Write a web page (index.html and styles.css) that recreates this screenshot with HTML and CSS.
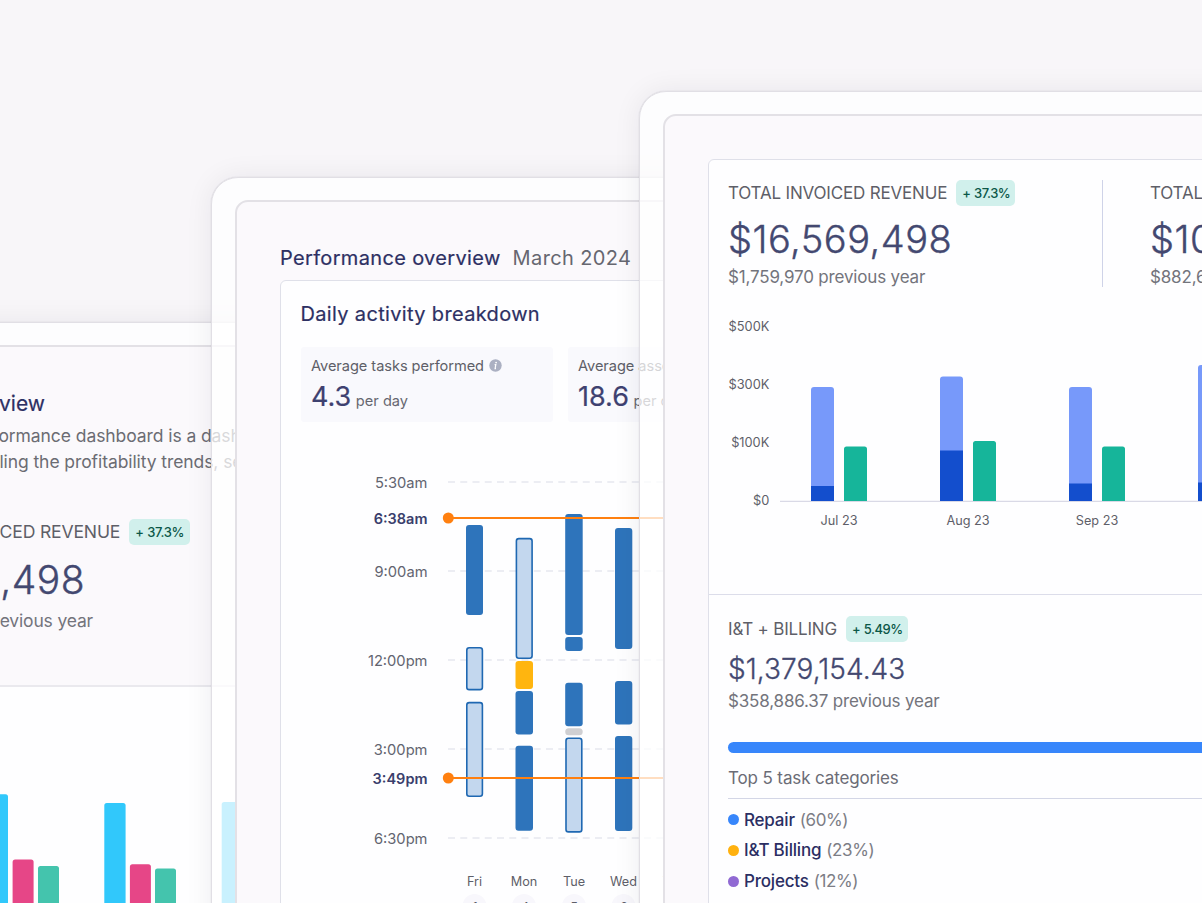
FILE: index.html
```html
<!DOCTYPE html>
<html lang="en">
<head>
<meta charset="utf-8">
<title>Performance dashboards</title>
<link rel="stylesheet" href="styles.css">
</head>
<body>
<main class="stage">

  <section class="window window-profit">
    <div class="screen">
      <header class="profit-head">
        <h2 class="profit-title">Profitability overview</h2>
        <p class="profit-copy profit-copy-a">performance dashboard is a dashboard</p>
        <p class="profit-copy profit-copy-b">detailing the profitability trends, seasonal</p>
        <div class="profit-kpi">
          <div class="kpi-head"><span class="kpi-name">TOTAL INVOICED REVENUE</span><span class="badge">+ 37.3%</span></div>
          <div class="kpi-value">$16,569,498</div>
          <div class="kpi-prev">$1,759,970 previous year</div>
        </div>
      </header>
      <svg class="profit-chart" viewBox="-190 687 620 300" width="620" height="300">
        <g fill="#31c8fb">
          <rect x="-13" y="794.3" width="21" height="150" rx="2.5"/>
          <rect x="104.3" y="803" width="21.3" height="150" rx="2.5"/>
          <rect x="221.7" y="802" width="21.3" height="150" rx="2.5"/>
        </g>
        <g fill="#e64687">
          <rect x="12.6" y="859.4" width="21" height="90" rx="2.5"/>
          <rect x="129.9" y="864.2" width="21" height="90" rx="2.5"/>
        </g>
        <g fill="#44c4ad">
          <rect x="38" y="866" width="21" height="90" rx="2.5"/>
          <rect x="155" y="868.4" width="21" height="90" rx="2.5"/>
        </g>
      </svg>
    </div>
  </section>

  <section class="window window-activity">
    <div class="screen">
      <header class="activity-head">
        <h2 class="title">Performance overview</h2>
        <span class="period">March 2024</span>
      </header>
      <div class="panel activity-panel">
        <h3 class="title activity-title">Daily activity breakdown</h3>
        <div class="stats">
          <div class="stat">
            <div class="stat-label">Average tasks performed
              <svg class="info" viewBox="0 0 13 13" width="13" height="13"><circle cx="6.5" cy="6.5" r="6.2" fill="#abb0c2"/><circle cx="7.1" cy="3.6" r="0.9" fill="#fff"/><path d="M5.6 5.6h1.2l-.7 4h.9" fill="none" stroke="#fff" stroke-width="1.2"/></svg>
            </div>
            <div class="stat-value">4.3 <small>per day</small></div>
          </div>
          <div class="stat">
            <div class="stat-label">Average assets serviced</div>
            <div class="stat-value">18.6 <small>per day</small></div>
          </div>
        </div>
        <svg class="activity-chart" viewBox="281 452 500 480" width="500" height="480">
          <g class="grid">
            <path d="M448 482H760M448 571H760M448 660H760M448 749H760M448 838H760"/>
          </g>
          <g class="time">
            <text x="427.5" y="487.7">5:30am</text>
            <text x="427.5" y="576.7">9:00am</text>
            <text x="427.5" y="665.7">12:00pm</text>
            <text x="427.5" y="754.7">3:00pm</text>
            <text x="427.5" y="843.7">6:30pm</text>
            <text class="mark" x="427.5" y="524">6:38am</text>
            <text class="mark" x="427.5" y="783.7">3:49pm</text>
          </g>
          <g fill="#2e74bb">
            <rect x="466" y="525" width="17" height="90" rx="3"/>
            <rect x="515.5" y="691" width="17.5" height="43.5" rx="3"/>
            <rect x="515.5" y="745.7" width="17.5" height="85" rx="3"/>
            <rect x="565.2" y="514" width="17.5" height="121" rx="3"/>
            <rect x="565.2" y="637" width="17.5" height="14" rx="3"/>
            <rect x="565.2" y="682.7" width="17.5" height="43.5" rx="3"/>
            <rect x="615" y="528" width="17.3" height="121" rx="3"/>
            <rect x="615" y="681" width="17.3" height="43.5" rx="3"/>
            <rect x="615" y="736" width="17.3" height="95" rx="3"/>
          </g>
          <g fill="#c3d7ee" stroke="#1f68b2" stroke-width="1.6">
            <rect x="466.8" y="647.8" width="15.6" height="41.8" rx="2.4"/>
            <rect x="466.8" y="702.6" width="15.6" height="93.6" rx="2.4"/>
            <rect x="516.4" y="538.6" width="15.7" height="119.6" rx="2.4"/>
            <rect x="566" y="738.3" width="15.8" height="93.6" rx="2.4"/>
          </g>
          <rect x="515.5" y="661" width="17.5" height="28" rx="3" fill="#ffb50f"/>
          <rect x="565.2" y="728.2" width="17.5" height="7" rx="3.5" fill="#cfcfd2"/>
          <g stroke="#ff8010" stroke-width="2"><path d="M448 518H760M448 778H760"/></g>
          <g fill="#ff8010"><circle cx="448.300" cy="518" r="5.5"/><circle cx="448.300" cy="778" r="5.5"/></g>
          <g class="day">
            <text x="474.5" y="886">Fri</text>
            <text x="524" y="886">Mon</text>
            <text x="574" y="886">Tue</text>
            <text x="623.5" y="886">Wed</text>
            <text x="674" y="886">Thu</text>
          </g>
          <g fill="#f8f7fc"><circle cx="474.5" cy="906" r="12"/><circle cx="524" cy="906" r="12"/><circle cx="574" cy="906" r="12"/><circle cx="623.5" cy="906" r="12"/></g>
          <g class="day">
            <text x="475" y="911.500">1</text>
            <text x="525" y="911.500">4</text>
            <text x="574" y="911.500">5</text>
            <text x="624" y="911.500">6</text>
          </g>
        </svg>
      </div>
    </div>
  </section>

  <section class="window window-revenue">
    <div class="screen">
      <div class="panel revenue-panel">
        <div class="kpis">
          <div class="kpi kpi-first">
            <div class="kpi-head"><span class="kpi-name">TOTAL INVOICED REVENUE</span><span class="badge">+ 37.3%</span></div>
            <div class="kpi-value">$16,569,498</div>
            <div class="kpi-prev">$1,759,970 previous year</div>
          </div>
          <div class="kpi">
            <div class="kpi-head"><span class="kpi-name">TOTAL INVOICED PROFIT</span></div>
            <div class="kpi-value">$10,382,645</div>
            <div class="kpi-prev">$882,645 previous year</div>
          </div>
        </div>
        <svg class="revenue-chart" viewBox="709 310 600 284" width="600" height="284">
          <g class="amount">
            <text x="769.3" y="331">$500K</text>
            <text x="769.3" y="389">$300K</text>
            <text x="769.3" y="447">$100K</text>
            <text x="769.3" y="505">$0</text>
          </g>
          <path d="M780 501.3H1300" stroke="#d9d9e6" stroke-width="1.2"/>
          <g fill="#7799fa">
            <path d="M811 501V390a3 3 0 0 1 3-3h17a3 3 0 0 1 3 3V501z"/>
            <path d="M940 501V379.500a3 3 0 0 1 3-3h17a3 3 0 0 1 3 3V501z"/>
            <path d="M1069 501V390a3 3 0 0 1 3-3h17a3 3 0 0 1 3 3V501z"/>
            <path d="M1198 501V368a3 3 0 0 1 3-3h17a3 3 0 0 1 3 3V501z"/>
          </g>
          <g fill="#134ecd">
            <rect x="811" y="486" width="23" height="15"/>
            <rect x="940" y="450.500" width="23" height="50.500"/>
            <rect x="1069" y="483.500" width="23" height="17.500"/>
            <rect x="1198" y="482.500" width="23" height="18.500"/>
          </g>
          <g fill="#16b59a">
            <path d="M844 501V449a2.500 2.500 0 0 1 2.500-2.500h18a2.500 2.500 0 0 1 2.500 2.500V501z"/>
            <path d="M973 501V443.500a2.500 2.500 0 0 1 2.500-2.500h18a2.500 2.500 0 0 1 2.500 2.500V501z"/>
            <path d="M1102 501V449a2.500 2.500 0 0 1 2.500-2.500h18a2.500 2.500 0 0 1 2.500 2.500V501z"/>
          </g>
          <g class="day">
            <text x="839" y="525">Jul 23</text>
            <text x="968" y="525">Aug 23</text>
            <text x="1097" y="525">Sep 23</text>
          </g>
        </svg>
        <div class="billing">
          <div class="kpi-head"><span class="kpi-name">I&amp;T + BILLING</span><span class="badge">+ 5.49%</span></div>
          <div class="billing-value">$1,379,154.43</div>
          <div class="kpi-prev billing-prev">$358,886.37 previous year</div>
          <div class="progress"></div>
          <div class="top-title">Top 5 task categories</div>
          <ul class="legend">
            <li><i class="dot dot-blue"></i>Repair <span>(60%)</span></li>
            <li><i class="dot dot-amber"></i>I&amp;T Billing <span>(23%)</span></li>
            <li><i class="dot dot-purple"></i>Projects <span>(12%)</span></li>
          </ul>
        </div>
      </div>
    </div>
  </section>

</main>
</body>
</html>
```

FILE: styles.css
```css
* { box-sizing: border-box; margin: 0; padding: 0; }

body {
  font-family: Inter, "Liberation Sans", sans-serif;
  color: #5e5f68;
  background: #f8f6f9;
}

svg { display: block; }

.stage {
  position: relative;
  width: 1202px;
  height: 903px;
  overflow: hidden;
}

/* Overlapping device frames */
.window {
  position: absolute;
  width: 1000px;
  height: 1000px;
  padding: 22px 23px;
  border: 1px solid #e1dfe5;
  border-radius: 27px;
  background: rgba(255, 255, 255, 0.74);
  box-shadow: 0 0 1px rgba(40, 40, 60, 0.3), 0 0 28px rgba(35, 25, 45, 0.07);
}
.window-profit { left: -216px; top: 322px; }
.window-activity { left: 211px; top: 177px; }
.window-revenue { left: 639px; top: 91px; }

.screen {
  height: 100%;
  border: 2px solid #e3e1e6;
  border-radius: 13px;
  background: #fbf9fc;
  overflow: hidden;
}

.panel {
  width: 1200px;
  height: 1000px;
  border: 1px solid #dfe0e9;
  border-radius: 6px;
  background: #fefeff;
}

.title { font-size: 20px; line-height: 28px; font-weight: 400; color: #2d3063; letter-spacing: 0.34px; -webkit-text-stroke: 0.2px #2d3063; }

/* Shared KPI block */
.kpi-head { display: flex; align-items: center; gap: 9px; height: 26px; white-space: nowrap; }
.kpi-name { font-size: 17px; line-height: 26px; letter-spacing: -0.18px; }
.badge {
  padding: 0 5px 0 6px;
  border-radius: 5px;
  background: #d1f0ec;
  color: #0b5748;
  font-size: 13px;
  line-height: 26px;
  font-weight: 500;
  letter-spacing: -0.52px;
  word-spacing: 0.8px;
}
.kpi-value { margin-top: 9px; font-size: 38px; line-height: 48px; font-weight: 300; color: #434870; letter-spacing: 0.5px; -webkit-text-stroke: 0.4px #434870; white-space: nowrap; }
.kpi-prev { margin-top: 4px; font-size: 17px; line-height: 20px; color: #73747c; letter-spacing: -0.17px; white-space: nowrap; }

/* Profitability window */
.profit-head { height: 340px; padding-top: 43px; border-bottom: 2px solid #eae9ee; white-space: nowrap; }
.profit-title { width: 235px; font-size: 21px; line-height: 28px; font-weight: 400; color: #2d3063; -webkit-text-stroke: 0.2px #2d3063; text-align: right; }
.profit-copy { font-size: 17.5px; line-height: 26px; color: #6b6c73; letter-spacing: -0.08px; }
.profit-copy-a { margin-top: 5px; padding-left: 155px; }
.profit-copy-b { padding-left: 149px; }
.profit-kpi { display: flex; flex-direction: column; width: 380px; margin-top: 44px; }
.profit-kpi .kpi-head { justify-content: flex-end; }
.profit-kpi .kpi-name { font-size: 17.6px; }
.profit-kpi .badge { padding: 0 6px; letter-spacing: -0.4px; }
.profit-kpi .kpi-value { width: 275px; margin-top: 11px; font-size: 39px; text-align: right; }
.profit-kpi .kpi-prev { width: 283px; margin-top: 7px; font-size: 17.5px; text-align: right; }
.profit-chart { background: #fefeff; }

/* Activity window */
.activity-head { display: flex; gap: 12px; padding: 42px 0 0 43px; height: 78px; }
.period { font-size: 20px; line-height: 28px; color: #666770; letter-spacing: 0.38px; }
.window-activity .panel { margin-left: 43px; }
.activity-title { margin: 19px 0 0 19.5px; }
.stats { display: flex; gap: 15px; margin: 19px 0 0 20px; }
.stat { width: 252px; height: 75px; padding: 10px; border-radius: 3px; background: #f9f9fd; white-space: nowrap; }
.stat-label { display: flex; align-items: center; gap: 5px; font-size: 14.6px; line-height: 18px; letter-spacing: -0.05px; }
.info { margin-top: -1px; }
.stat-value { margin-top: 5px; font-size: 27px; line-height: 34px; color: #3e4170; -webkit-text-stroke: 0.2px #3e4170; }
.stat-value small { margin-left: -3px; font-size: 14.6px; color: #666770; -webkit-text-stroke: 0; }
.activity-chart { margin-top: 30px; }
.grid { fill: none; stroke: #e6e8f0; stroke-width: 1.5; stroke-dasharray: 7 5.25; }
.time { font-size: 14.7px; fill: #62646f; text-anchor: end; }
.mark { font-size: 14.5px; font-weight: 600; fill: #3a3e6c; }
.day { font-size: 12.7px; fill: #5e5f69; text-anchor: middle; }
.amount { font-size: 12.8px; fill: #5e5f69; text-anchor: end; }

/* Revenue window */
.window-revenue .panel { margin: 43px 0 0 43px; }
.kpis { display: flex; gap: 47px; padding: 20px 0 0 19px; }
.kpi { height: 107px; }
.kpi-first { width: 375px; border-right: 1px solid #cfd3e8; }
.revenue-chart { margin-top: 23px; }
.billing { padding: 21px 0 0 19px; border-top: 1px solid #dcddea; }
.billing-value { margin-top: 9px; font-size: 28px; line-height: 36px; font-weight: 300; color: #434870; letter-spacing: 0.05px; -webkit-text-stroke: 0.3px #434870; }
.billing-prev { margin-top: 4px; }
.progress { height: 11px; margin-top: 31px; border-radius: 6px; background: #3786fb; }
.top-title { margin-top: 15px; padding-bottom: 9px; font-size: 17px; line-height: 21px; letter-spacing: -0.13px; border-bottom: 1px solid #d3d6e6; color: #6b6c76; }
.legend { margin-top: 5.6px; list-style: none; font-size: 17px; line-height: 30.6px; letter-spacing: -0.2px; color: #2b2e63; font-weight: 500; }
.legend li { display: flex; align-items: center; gap: 5px; height: 30.6px; white-space: nowrap; }
.legend span { color: #7c7d85; font-weight: 400; letter-spacing: -0.4px; }
.dot { width: 11px; height: 11px; border-radius: 50%; }
.dot-blue { background: #3786fb; }
.dot-amber { background: #ffb10f; }
.dot-purple { background: #9069d3; }
```
